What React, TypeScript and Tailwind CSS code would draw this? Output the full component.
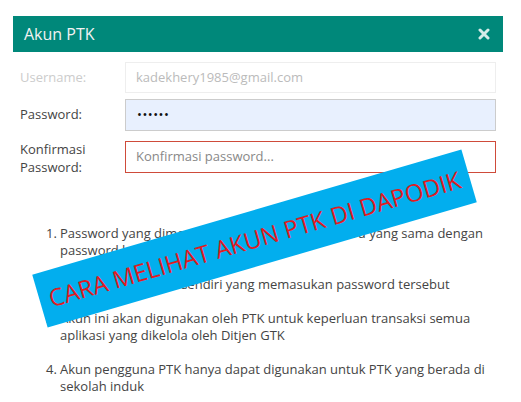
import React from "react";

const items: string[][] = [
  ["Password yang dimasukkan adalah password baru yang sama dengan", "password konfirmasi"],
  ["Pastikan hanya PTK sendiri yang memasukan password tersebut"],
  ["Akun ini akan digunakan oleh PTK untuk keperluan transaksi semua", "aplikasi yang dikelola oleh Ditjen GTK"],
  ["Akun pengguna PTK hanya dapat digunakan untuk PTK yang berada di", "sekolah induk"],
];

export default function App() {
  return (
    <div className="relative w-[521px] h-[402px] overflow-hidden bg-white" style={{ fontFamily: '"Open Sans", "Noto Sans", sans-serif' }}>
      <div className="pt-[16px] pl-[13px] w-[503px]">
        <div className="h-[36px] bg-[#00887a] flex items-center justify-between pl-[11px] pr-[13px]">
          <span className="text-[16px] text-[#f2f2f2]">Akun PTK</span>
          <svg width="12" height="12" viewBox="0 0 12 12">
            <path d="M2 2 L10 10 M10 2 L2 10" stroke="#d6ece9" strokeWidth="3" strokeLinecap="round" />
          </svg>
        </div>
        <div className="pt-[10px] pl-[7px] pr-[7px] text-[13px]">
          <div className="flex items-center h-[31px]">
            <div className="w-[105px] text-[#cccccc]">Username:</div>
            <div className="flex-1 h-[31px] border border-[#eeeeee] flex items-center pl-[10px] text-[#bbbbbb]">kadekhery1985@gmail.com</div>
          </div>
          <div className="flex items-center h-[32px] mt-[6px]">
            <div className="w-[105px] text-[#444444]">Password:</div>
            <div className="flex-1 h-[32px] border border-[#cccccc] bg-[#e8f0fe] flex items-center pl-[11px] text-[#111] tracking-[0.5px] text-[13px]">••••••</div>
          </div>
          <div className="flex items-center h-[32px] mt-[10px]">
            <div className="w-[105px] text-[#444444] leading-[18px] pt-[2px]">Konfirmasi<br />Password:</div>
            <div className="flex-1 h-[32px] border border-[#cf4b3a] flex items-center pl-[10px] text-[#888888]">Konfirmasi password...</div>
          </div>
        </div>
        <div className="mt-[52px] pl-[33px] text-[13px] leading-[17px] text-[#444444] flex flex-col gap-[17px]">
          {items.map((lines, i) => (
            <div key={i} className="flex">
              <span className="w-[14px] shrink-0">{i + 1}.</span>
              <span className="w-[440px]">
                {lines.map((l, j) => (
                  <span key={j} className="block whitespace-nowrap">{l}</span>
                ))}
              </span>
            </div>
          ))}
        </div>
      </div>
      <div
        className="absolute left-[31px] top-[211px] w-[447px] h-[55px] bg-[#02aeee] flex items-center justify-center -rotate-[16.25deg]"
      >
        <span className="text-[24px] text-[#e01b22] whitespace-nowrap leading-none" style={{ fontFamily: '"Open Sans", sans-serif' }}>
          CARA MELIHAT AKUN PTK DI DAPODIK
        </span>
      </div>
    </div>
  );
}
